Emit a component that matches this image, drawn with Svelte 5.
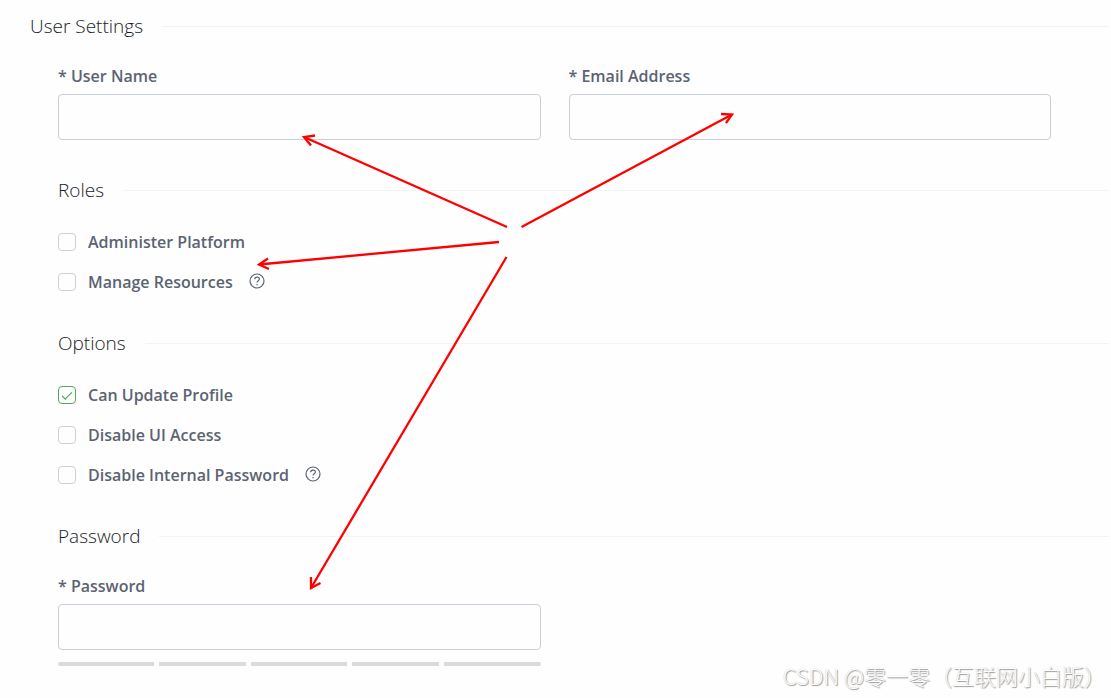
<script lang="ts">
  interface Option {
    id: string;
    label: string;
    checked: boolean;
    help?: boolean;
  }

  let roles: Option[] = $state([
    { id: 'admin', label: 'Administer Platform', checked: false },
    { id: 'resources', label: 'Manage Resources', checked: false, help: true },
  ]);

  let options: Option[] = $state([
    { id: 'profile', label: 'Can Update Profile', checked: true },
    { id: 'ui-access', label: 'Disable UI Access', checked: false },
    { id: 'internal', label: 'Disable Internal Password', checked: false, help: true },
  ]);

  let userName = $state('');
  let email = $state('');
  let password = $state('');

  const arrows = [
    { line: 'M507 227L304 137', head: 'M315 135.500L304 137L311 145.500' },
    { line: 'M521.500 227L732 114.500', head: 'M721 114L732 114.500L726 123' },
    { line: 'M499 242L259 264.500', head: 'M268 258.500L259 264.500L269 269' },
    { line: 'M506.500 257L311 588', head: 'M311 577L311 588L320.500 583' },
  ];
</script>

{#snippet optionList(items: Option[])}
  <div class="option-list">
    {#each items as item (item.id)}
      <div class="option">
        <input type="checkbox" id={item.id} bind:checked={item.checked} />
        <label for={item.id}>{item.label}</label>
        {#if item.help}
          <button type="button" class="help" aria-label="Help">
            <svg viewBox="0 0 16 16" width="16" height="16">
              <circle cx="8" cy="8" r="7" />
              <path d="M5.700 6.300C5.700 3.300 10.400 3.400 10.400 6.100C10.400 7.700 8 7.700 8 9.600M8 10.900V12.300" />
            </svg>
          </button>
        {/if}
      </div>
    {/each}
  </div>
{/snippet}

<main class="page">
  <form class="settings">
    <h1 class="heading">User Settings</h1>

    <div class="content">
      <div class="fields">
        <div class="field">
          <label for="user-name">* User Name</label>
          <input type="text" id="user-name" bind:value={userName} />
        </div>
        <div class="field">
          <label for="email">* Email Address</label>
          <input type="email" id="email" bind:value={email} />
        </div>
      </div>

      <h2 class="heading">Roles</h2>
      {@render optionList(roles)}

      <h2 class="heading">Options</h2>
      {@render optionList(options)}

      <h2 class="heading">Password</h2>
      <div class="fields">
        <div class="field">
          <label for="password">* Password</label>
          <input type="password" id="password" bind:value={password} />
          <div class="strength">
            <span></span><span></span><span></span><span></span><span></span>
          </div>
        </div>
      </div>
    </div>
  </form>

  <svg class="arrows" width="1111" height="698" viewBox="0 0 1111 698" aria-hidden="true">
    {#each arrows as arrow}
      <path d={arrow.line} />
      <path d={arrow.head} />
    {/each}
  </svg>

  <div class="watermark">CSDN @零一零（互联网小白版）</div>
</main>

<style>
  :global(body) {
    margin: 0;
    background: #fefefe;
  }

  .page {
    position: relative;
    min-height: 100vh;
    box-sizing: border-box;
    padding: 12px 2px 32px 30px;
    overflow: hidden;
    font-family: 'Open Sans', 'Noto Sans CJK SC', sans-serif;
    color: #5b6373;
  }

  .content {
    padding-left: 28px;
  }

  .heading {
    display: flex;
    align-items: center;
    gap: 19px;
    margin: 0;
    font-size: 19px;
    font-weight: 300;
    line-height: 28px;
    color: #181c26;
  }

  .heading::after {
    content: '';
    flex: 1;
    height: 1px;
    background: #f2f3f5;
  }

  h2.heading {
    margin-top: 36px;
  }

  .fields {
    display: grid;
    grid-template-columns: 1fr 1fr;
    gap: 28px;
    padding: 26px 58px 0 0;
  }

  .field {
    display: flex;
    flex-direction: column;
  }

  .field label {
    font-size: 16px;
    font-weight: 600;
    line-height: 20px;
    margin-bottom: 8px;
  }

  .field input {
    box-sizing: border-box;
    width: 100%;
    height: 46px;
    padding: 0 12px;
    border: 1px solid #c8cfda;
    border-radius: 4px;
    background: #fefefe;
    font: inherit;
    color: inherit;
  }

  .option-list {
    display: flex;
    flex-direction: column;
    gap: 20px;
    padding: 28px 0 1px;
  }

  .option {
    display: flex;
    align-items: center;
    height: 20px;
  }

  .option input {
    appearance: none;
    display: grid;
    place-items: center;
    width: 18px;
    height: 18px;
    margin: 0 12px 0 0;
    border: 1px solid #cbd0dc;
    border-radius: 4px;
  }

  .option input:checked {
    border-color: #55a95a;
  }

  .option input:checked::after {
    content: '';
    width: 10px;
    height: 5px;
    box-sizing: border-box;
    border-left: 1px solid #43a047;
    border-bottom: 1px solid #43a047;
    transform: translateY(-1px) rotate(-45deg);
  }

  .option label {
    font-size: 16px;
    font-weight: 600;
    line-height: 20px;
  }

  .help {
    display: flex;
    margin: 0 0 2px 16px;
    padding: 0;
    border: none;
    background: none;
    cursor: pointer;
  }

  .help svg {
    fill: none;
    stroke: #5b6373;
    stroke-width: 1.2;
  }

  .strength {
    display: grid;
    grid-template-columns: 96fr 87fr 96fr 87fr 96fr;
    gap: 5px;
    margin-top: 12px;
  }

  .strength span {
    height: 4px;
    background: #dbdbdb;
  }

  .strength span:first-child {
    border-radius: 2px 0 0 2px;
  }

  .strength span:last-child {
    border-radius: 0 2px 2px 0;
  }

  .arrows {
    position: absolute;
    top: 0;
    left: 0;
    pointer-events: none;
    fill: none;
    stroke: #ff0000;
    stroke-width: 2.3;
  }

  .watermark {
    position: absolute;
    right: 5px;
    bottom: 9px;
    font-family: 'Noto Sans CJK SC', sans-serif;
    font-size: 22px;
    font-weight: 300;
    line-height: 28px;
    color: #fefefe;
    text-shadow: 1px 1px 1px #999, 0 0 1px #bbb;
    white-space: nowrap;
  }
</style>
